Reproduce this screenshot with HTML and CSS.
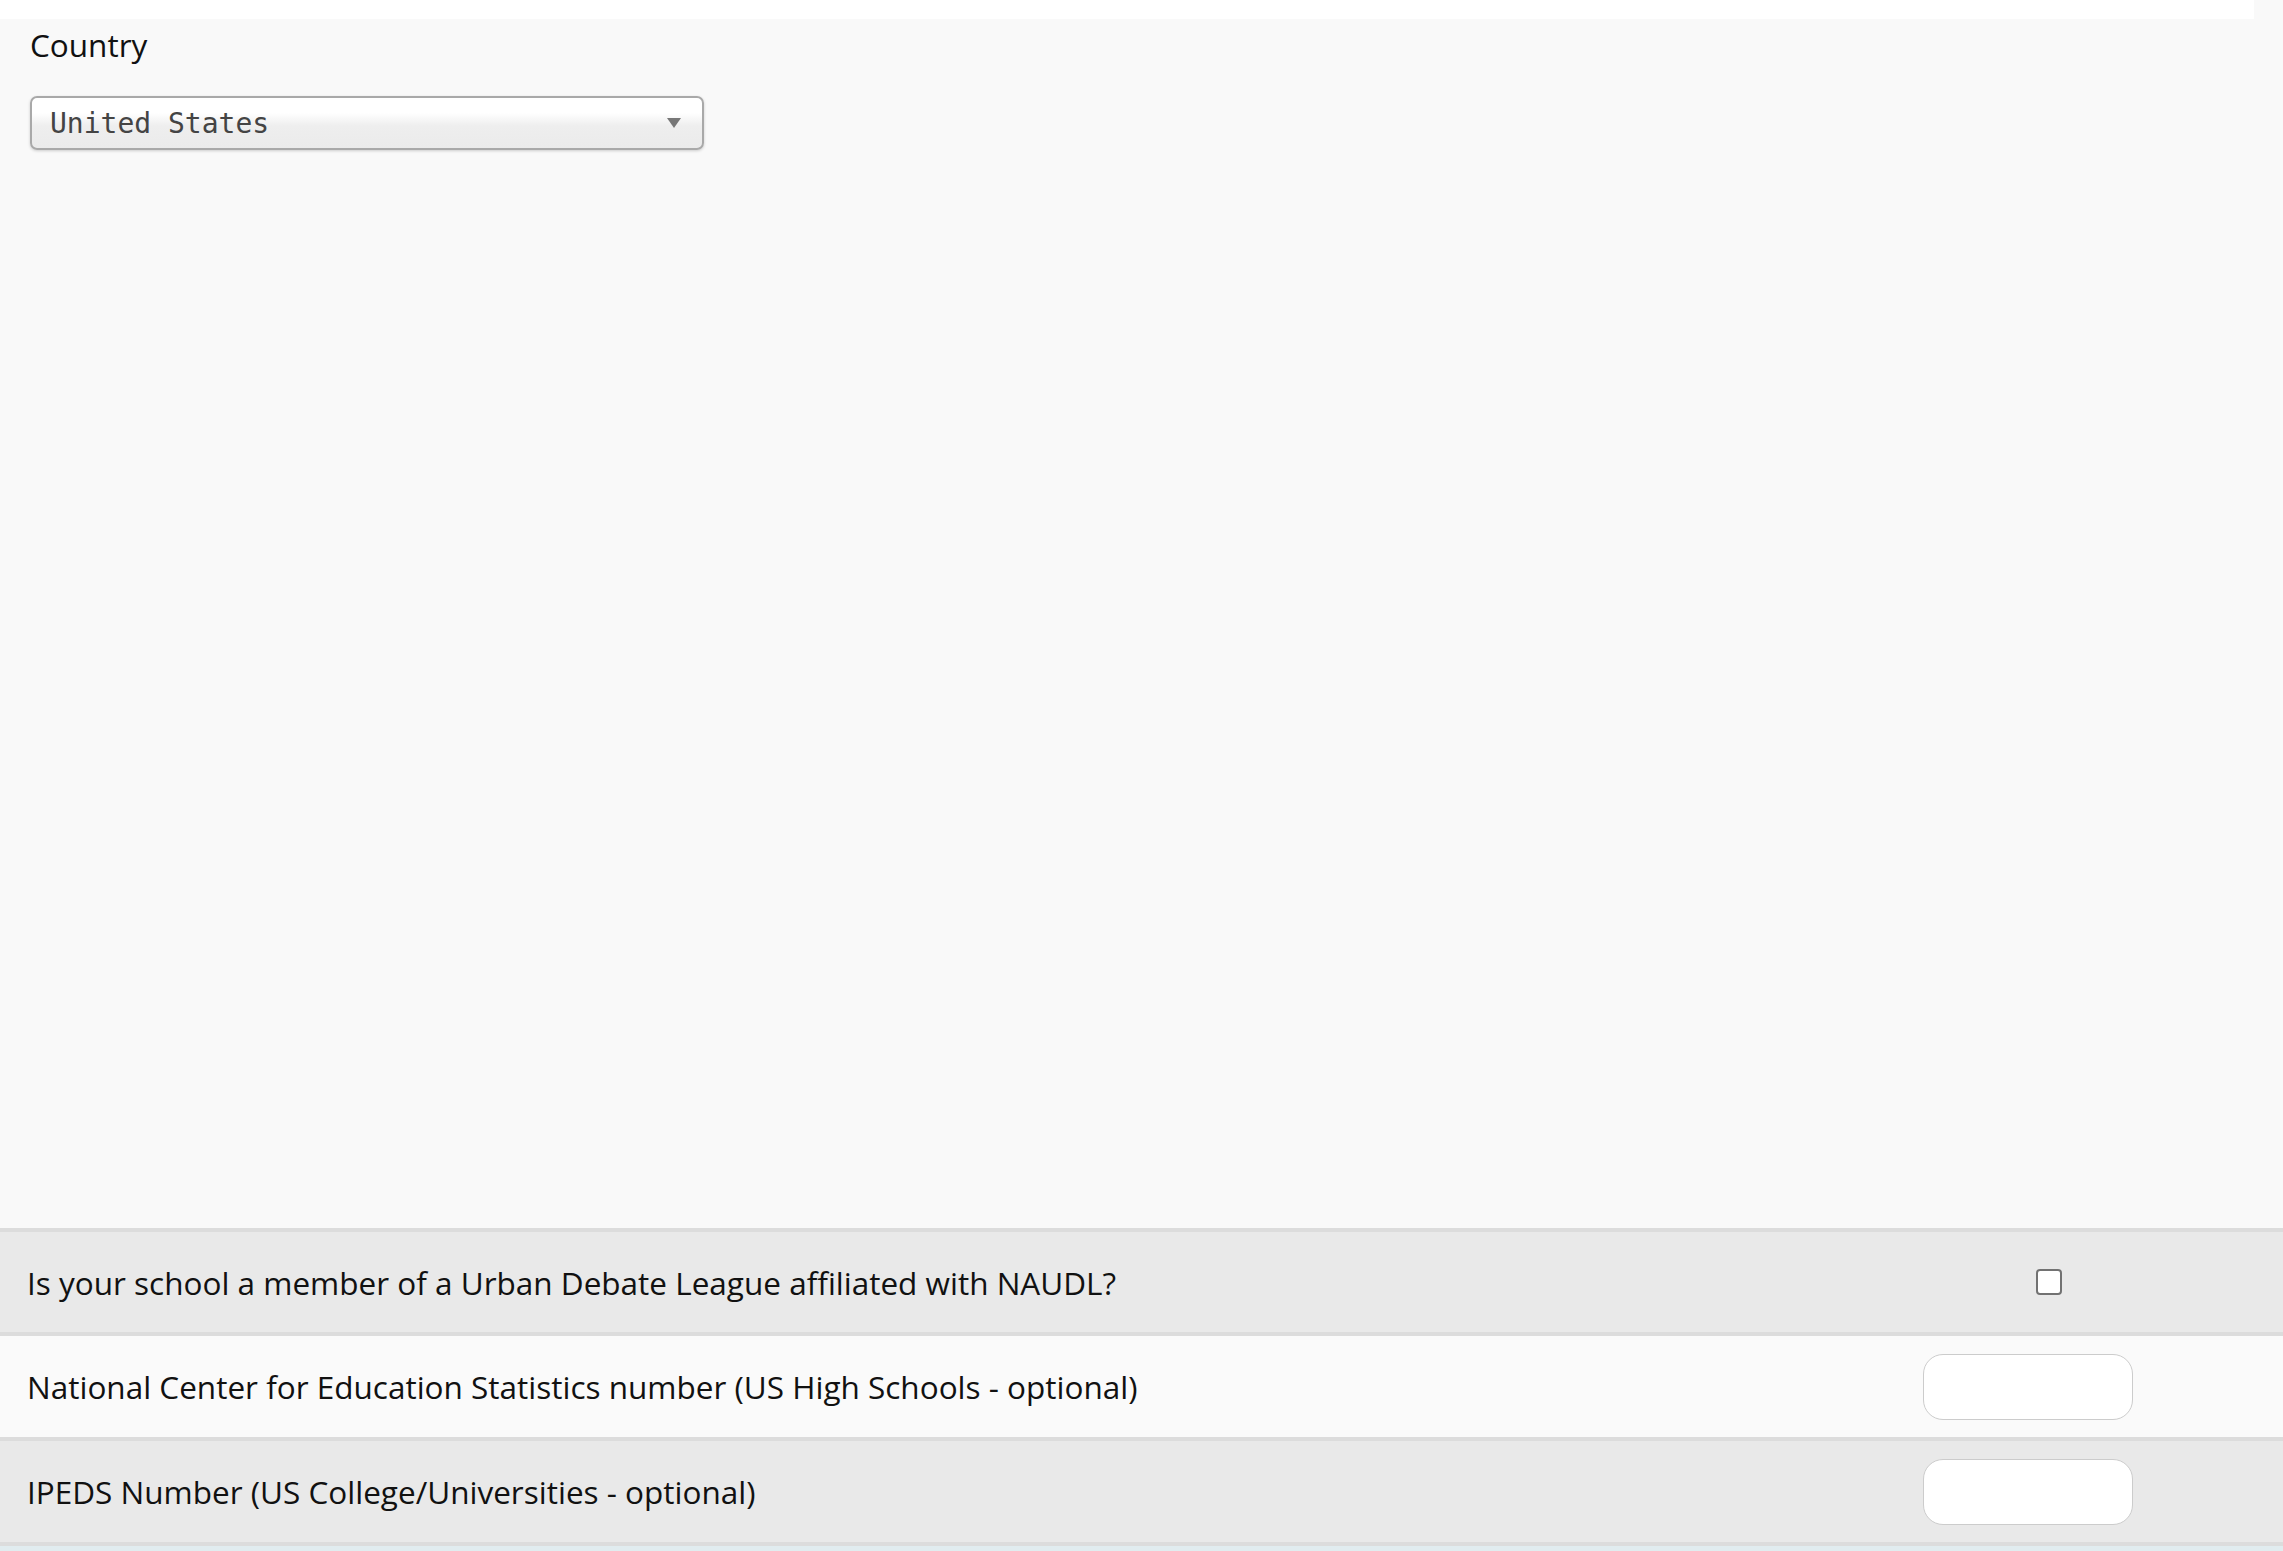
FILE: index.html
```html
<!DOCTYPE html>
<html lang="en">
<head>
<meta charset="utf-8">
<title>School details</title>
<link rel="stylesheet" href="styles.css">
</head>
<body>
<div class="topbar"></div>
<section class="country-section">
  <div class="field-label">Country</div>
  <div class="select-box">
    <span class="select-value">United States</span>
    <svg class="select-arrow" width="14" height="10" viewBox="0 0 14 10"><path d="M0 0 H14 L7 10 Z" fill="#777"/></svg>
  </div>
</section>
<section class="rows">
  <div class="row row-alt">
    <div class="row-label">Is your school a member of a Urban Debate League affiliated with NAUDL?</div>
    <div class="row-control"><input type="checkbox" class="check"></div>
  </div>
  <div class="row">
    <div class="row-label">National Center for Education Statistics number (US High Schools - optional)</div>
    <div class="row-control"><input type="text" class="text-input"></div>
  </div>
  <div class="row row-alt row-last">
    <div class="row-label">IPEDS Number (US College/Universities - optional)</div>
    <div class="row-control"><input type="text" class="text-input"></div>
  </div>
</section>
<div class="footer"></div>
</body>
</html>
```
FILE: styles.css
```css
html, body {
  margin: 0;
  padding: 0;
}
body {
  background: #f9f9f9;
  font-family: "Open Sans", "Liberation Sans", sans-serif;
  color: #111;
  overflow: hidden;
}
.topbar {
  width: 2254px;
  height: 19px;
  background: #fff;
}
.country-section {
  height: 1209px;
  box-sizing: border-box;
  padding: 5px 0 0 30px;
}
.field-label {
  font-size: 31.5px;
  line-height: 42px;
  color: #111;
}
.select-box {
  margin-top: 30px;
  width: 674px;
  height: 54px;
  box-sizing: border-box;
  border: 2px solid #a9a9a9;
  border-radius: 7px;
  background: linear-gradient(#ffffff 30%, #eeeeee 56%, #ebebeb 100%);
  box-shadow: 0 1px 3px rgba(0,0,0,0.18);
  display: flex;
  align-items: center;
  justify-content: space-between;
  padding: 0 21px 0 18px;
}
.select-value {
  font-family: "DejaVu Sans Mono", "Liberation Mono", monospace;
  font-size: 28px;
  color: #444;
}
.select-arrow {
  display: block;
}
.rows {
  display: flex;
  flex-direction: column;
}
.row {
  display: flex;
  align-items: center;
  height: 100px;
  border-top: 4px solid #dcdcdc;
  background: #fafafa;
  padding-left: 27px;
}
.row + .row {
  height: 101px;
}
.row-alt {
  background: #e9e9e9;
}
.row-last {
  border-bottom: 4px solid #dcdcdc;
}
.row-label {
  flex: 1;
  font-size: 31.5px;
  color: #111;
}
.row-control {
  width: 360px;
  display: flex;
  align-items: center;
}
.check {
  appearance: none;
  -webkit-appearance: none;
  margin: 0 0 0 113px;
  width: 26px;
  height: 26px;
  box-sizing: border-box;
  border: 2px solid #727272;
  border-radius: 4px;
  background: #fff;
}
.text-input {
  margin: 0;
  width: 210px;
  height: 66px;
  box-sizing: border-box;
  border: 1.5px solid #cccccc;
  border-radius: 20px;
  background: #fff;
  outline: none;
}
.footer {
  height: 5px;
  background: #e1ecef;
}
```
